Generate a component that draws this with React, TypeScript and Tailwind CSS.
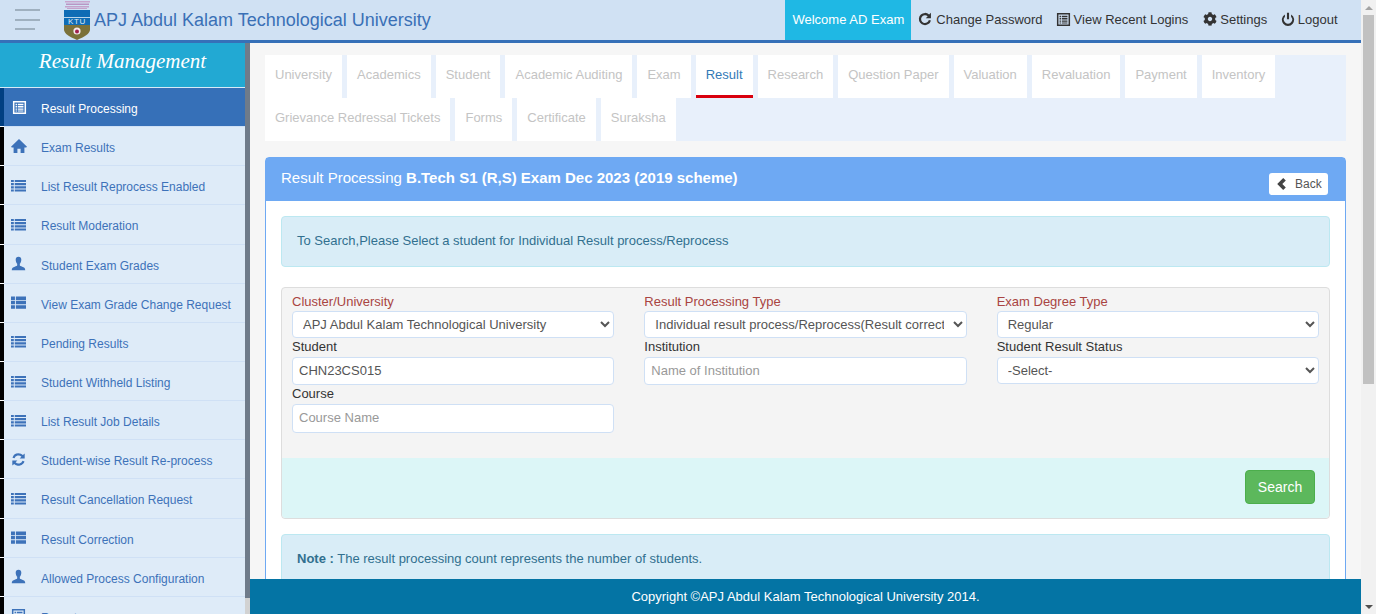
import React from "react";
import { FaCog } from "react-icons/fa";

const Ic = ({ children, size = 14 }: { children: React.ReactNode; size?: number }) => (
  <svg viewBox="0 0 16 16" width={size} height={size} fill="currentColor" className="block">{children}</svg>
);
const ListIcon = () => (
  <Ic size={15}>
    <path d="M0 2h3v2.3H0zM4 2h12v2.3H4zM0 5.4h3v2.3H0zM4 5.4h12v2.3H4zM0 8.8h3v2.3H0zM4 8.8h12v2.3H4zM0 12.2h3v2.3H0zM4 12.2h12v2.3H4z" />
  </Ic>
);
const ThList = () => (
  <Ic size={15}>
    <path d="M0 1.5h4.2v3.7H0zM5.2 1.5H16v3.7H5.2zM0 6.2h4.2v3.7H0zM5.2 6.2H16v3.7H5.2zM0 10.9h4.2v3.7H0zM5.2 10.9H16v3.7H5.2z" />
  </Ic>
);
const Book = () => (
  <Ic size={15}>
    <path fillRule="evenodd" d="M1 1h14v14H1zM2.600 2.600v10.800h10.800V2.600zM3.800 4h1.500v1.500H3.800zM6.200 4h6v1.500h-6zM3.800 6.500h1.500V8H3.800zM6.200 6.500h6V8h-6zM3.800 9h1.500v1.500H3.800zM6.200 9h6v1.500h-6zM3.800 11.300h1.500v1H3.800zM6.200 11.300h6v1h-6z" />
  </Ic>
);
const Home = () => (
  <Ic size={16}>
    <path d="M8 1 16 8.700l-.8.900H13.400V15H9.600v-4.300H6.400V15H2.600V9.600H.8L0 8.700z" />
  </Ic>
);
const User = () => (
  <Ic size={15}>
    <path d="M8 .8c2 0 3 1.400 3 3.200 0 1.900-.9 3.600-1.600 4.300v1.600c0 .6 1.100 1 2.600 1.600 1.800.7 3.200 1.200 3.200 3.700H.8c0-2.500 1.400-3 3.200-3.700 1.500-.6 2.600-1 2.600-1.600V8.300C5.900 7.600 5 5.900 5 4c0-1.800 1-3.200 3-3.200z" />
  </Ic>
);
const Refresh = () => (
  <Ic size={15}>
    <path d="M8 1.300a6.600 6.600 0 0 1 4.700 2L14.600 1.500V7H9.200l1.900-1.900A4.400 4.400 0 0 0 3.700 6.700L1.600 6A6.600 6.600 0 0 1 8 1.300zM1.400 9h5.400l-1.900 1.900a4.400 4.400 0 0 0 7.400-1.600l2.100.7a6.600 6.600 0 0 1-11 2.700L1.400 14.500z" />
  </Ic>
);
const Redo = () => (
  <Ic>
    <path d="M8 1a7 7 0 0 1 4.700 1.800L14.800 .8V7H8.900l2.200-2.200a4.500 4.500 0 1 0 1.300 4.400l2.400.5A7 7 0 1 1 8 1z" />
  </Ic>
);
const Power = () => (
  <Ic>
    <path d="M6.800 .8h2.400v7.400H6.800zM4.500 2.800v2.600a4.700 4.700 0 1 0 7 0V2.800a7 7 0 1 1-7 0z" />
  </Ic>
);
const Chevron = () => (
  <svg viewBox="0 0 10 12" width="10" height="12" fill="#444" className="block">
    <path d="M6.200 0 8.800 2.600 5.300 6l3.500 3.400L6.200 12 0.200 6z" />
  </svg>
);

const Logo = () => (
  <svg width="26" height="40" viewBox="0 0 26 40" className="shrink-0 mt-[1px]">
    <rect x="1" y="0" width="25" height="1.500" fill="#c9a6cf" />
    <rect x="2" y="2.500" width="23" height="1.500" fill="#b995c4" />
    <rect x="1" y="5" width="24" height="1.500" fill="#c4a2cb" />
    <rect x="3" y="7" width="20" height="1" fill="#c4a2cb" />
    <rect x="0" y="9" width="26" height="15" fill="#0f6cb5" />
    <rect x="0" y="16" width="26" height="1" fill="#bcd6ea" />
    <text x="13" y="23" textAnchor="middle" fontSize="8" letterSpacing="0.6" fill="#dfeaf4" fontFamily="'Liberation Sans', sans-serif">KTU</text>
    <path d="M0 24h26v4.500C26 33 20 36 13 39 6 36 0 33 0 28.500z" fill="#7b7139" />
    <circle cx="13" cy="30" r="3.600" fill="#f3e9ec" />
    <circle cx="13" cy="30.500" r="2" fill="#a0214e" />
  </svg>
);

const sideItems: [string, React.ReactNode][] = [
  ["Exam Results", <Home />],
  ["List Result Reprocess Enabled", <ListIcon />],
  ["Result Moderation", <ListIcon />],
  ["Student Exam Grades", <User />],
  ["View Exam Grade Change Request", <ThList />],
  ["Pending Results", <ListIcon />],
  ["Student Withheld Listing", <ListIcon />],
  ["List Result Job Details", <ListIcon />],
  ["Student-wise Result Re-process", <Refresh />],
  ["Result Cancellation Request", <ListIcon />],
  ["Result Correction", <ThList />],
  ["Allowed Process Configuration", <User />],
  ["Reports", <Book />],
];

const row1 = ["University", "Academics", "Student", "Academic Auditing", "Exam", "Result", "Research", "Question Paper", "Valuation", "Revaluation", "Payment", "Inventory"];
const row2 = ["Grievance Redressal Tickets", "Forms", "Certificate", "Suraksha"];

const Tab = ({ t }: { t: string }) => (
  <div
    className={
      "h-[43px] px-[10px] pt-[12px] mr-[5px] bg-white text-[13px] leading-[15px] " +
      (t === "Result" ? "text-[#337ab7] border-b-[3px] border-[#d9000d]" : "text-[#c4c4c4]")
    }
  >
    {t}
  </div>
);

const NavLink = ({ icon, label, cls }: { icon: React.ReactNode; label: string; cls: string }) => (
  <div className={"flex items-center text-[13px] text-[#333] " + cls}>
    <span className="-mt-[2px]">{icon}</span>
    <span>{label}</span>
  </div>
);

const labelRed = "block text-[13px] leading-[15px] text-[#a94442] h-[16px]";
const labelDark = "block text-[13px] leading-[15px] text-[#333] h-[16px] mt-[1px]";
const selectCls = "block w-full h-[27px] mt-[1px] pl-[6px] pr-[6px] text-[13px] text-[#555] bg-white border border-[#cfe0f5] rounded-[4px]";
const inputCls = "block w-full h-[28px] mt-[2px] px-[6px] pb-[2px] text-[13px] text-[#555] placeholder:text-[#999] bg-white border border-[#cfe0f5] rounded-[4px] outline-none";

export default function App() {
  return (
    <div className="h-[614px] w-[1376px] flex overflow-hidden bg-[#f6f6f6] font-['Liberation_Sans',Arial,sans-serif]">
      <div className="w-[1361px] flex flex-col h-full">
        <header className="h-[43px] shrink-0 flex items-stretch bg-[#d0e1f3] border-b-[3px] border-[#3670b8]">
          <div className="w-[64px] shrink-0 pl-[15px] pt-[9px] flex flex-col gap-[7.5px]">
            <div className="w-[25px] h-[2px] bg-[#9fb0bf]" />
            <div className="w-[25px] h-[2px] bg-[#9fb0bf]" />
            <div className="w-[20px] h-[2px] bg-[#9fb0bf]" />
          </div>
          <Logo />
          <div className="ml-[4px] text-[18px] leading-[40px] text-[#3a70b6]">APJ Abdul Kalam Technological University</div>
          <div className="ml-auto flex items-stretch pr-[16px]">
            <div className="w-[126px] flex items-center justify-center bg-[#1fb8e4] text-white text-[13px]">Welcome AD Exam</div>
            <NavLink icon={<Redo />} label="Change Password" cls="gap-[4.5px] pl-[6.5px] pr-[5.5px]" />
            <NavLink icon={<Book />} label="View Recent Logins" cls="gap-[3px] px-[7.5px]" />
            <NavLink icon={<FaCog size={14} className="block" />} label="Settings" cls="gap-[3px] pl-[7.5px] pr-[6px]" />
            <NavLink icon={<Power />} label="Logout" cls="gap-[3px] px-[7.5px]" />
          </div>
        </header>
        <div className="flex flex-1 min-h-0">
          <aside className="w-[250px] shrink-0 flex overflow-hidden">
            <div className="w-[245px] shrink-0 bg-white">
              <div className="h-[45px] bg-[#22a9d3] border-b border-[#d8ebf7] text-center text-white italic text-[21px] leading-[36px] font-['Liberation_Serif',serif]">
                Result Management
              </div>
              <div className="h-[39.1px] flex">
                <div className="w-[4px] shrink-0 mb-[1px] bg-[#003f82]" />
                <div className="flex-1 flex items-center pt-[4px] bg-[#3670b8] border-b border-[#cfe0f5] text-white text-[12px]">
                  <span className="w-[37px] pl-[8px] -mt-[4px]"><Book /></span>
                  <span>Result Processing</span>
                </div>
              </div>
              {sideItems.map(([label, icon]) => (
                <div key={label} className="h-[39.15px] flex">
                  <div className="w-[4px] shrink-0 mb-[1px] bg-black" />
                  <div className="flex-1 flex items-center pt-[4px] bg-[#deebf8] border-b border-[#cfe0f5] text-[#3d72b9] text-[12px]">
                    <span className="w-[37px] pl-[7px] -mt-[4px]">{icon}</span>
                    <span>{label}</span>
                  </div>
                </div>
              ))}
            </div>
            <div className="w-[5px] shrink-0 h-full bg-[#d2d2d2]">
              <div className="h-[555px] bg-[#6f7b8a]" />
            </div>
          </aside>
          <div className="flex-1 min-w-0 flex flex-col">
            <main className="flex-1 min-h-0 overflow-hidden pl-[15px] pr-[15px] pt-[12px]">
              <div className="h-[86px] bg-[#e8f0fb] flex flex-wrap content-start">
                <div className="flex w-full">{row1.map((t) => <Tab key={t} t={t} />)}</div>
                <div className="flex w-full">{row2.map((t) => <Tab key={t} t={t} />)}</div>
              </div>
              <section className="mt-[16px] border border-[#6ea9f3] rounded-t-[4px] bg-white">
                <div className="h-[43px] bg-[#6ea9f3] flex items-start justify-between pl-[15px] pr-[17px] text-white">
                  <div className="text-[15px] leading-[39px]">Result Processing <b>B.Tech S1 (R,S) Exam Dec 2023 (2019 scheme)</b></div>
                  <div className="mt-[15px] h-[22px] w-[59px] bg-white rounded-[3px] flex items-center pl-[8px] gap-[8px] text-[12px] text-[#555]">
                    <Chevron />
                    <span>Back</span>
                  </div>
                </div>
                <div className="px-[15px] pt-[15px] pb-[40px]">
                  <div className="h-[51px] bg-[#d9edf7] border border-[#bce8f1] rounded-[4px] flex items-center pl-[15px] pb-[2px] text-[13px] text-[#31708f]">
                    To Search,Please Select a student for Individual Result process/Reprocess
                  </div>
                  <div className="mt-[20px] h-[232px] bg-[#f4f4f4] border border-[#ddd] rounded-[4px] flex flex-col">
                    <div className="h-[170px] shrink-0 px-[10px] pt-[6px] grid grid-cols-3 gap-x-[30px] content-start">
                      <div>
                        <label className={labelRed}>Cluster/University</label>
                        <select className={selectCls} defaultValue="a">
                          <option value="a">APJ Abdul Kalam Technological University</option>
                        </select>
                        <label className={labelDark}>Student</label>
                        <input className={inputCls} defaultValue="CHN23CS015" />
                        <label className={labelDark}>Course</label>
                        <input className={inputCls + " h-[29px]"} placeholder="Course Name" />
                      </div>
                      <div>
                        <label className={labelRed}>Result Processing Type</label>
                        <select className={selectCls} defaultValue="a">
                          <option value="a">Individual result process/Reprocess(Result correction)</option>
                        </select>
                        <label className={labelDark}>Institution</label>
                        <input className={inputCls} placeholder="Name of Institution" />
                      </div>
                      <div>
                        <label className={labelRed}>Exam Degree Type</label>
                        <select className={selectCls} defaultValue="a">
                          <option value="a">Regular</option>
                        </select>
                        <label className={labelDark}>Student Result Status</label>
                        <select className={selectCls + " mt-[2px]"} defaultValue="a">
                          <option value="a">-Select-</option>
                        </select>
                      </div>
                    </div>
                    <div className="flex-1 bg-[#dcf6f7] flex justify-end items-start pt-[12px] pr-[14px] rounded-b-[4px]">
                      <div className="w-[70px] h-[34px] bg-[#5cb85c] border border-[#4cae4c] rounded-[4px] text-white text-[14px] flex items-center justify-center">Search</div>
                    </div>
                  </div>
                  <div className="mt-[15px] h-[80px] bg-[#d9edf7] border border-[#bce8f1] rounded-[4px] pl-[15px] pt-[16px] text-[13px] leading-[15px] text-[#31708f]">
                    <b>Note :</b> The result processing count represents the number of students.
                  </div>
                </div>
              </section>
            </main>
            <footer className="h-[35px] shrink-0 bg-[#0474a4] text-white text-[13px] flex items-center justify-center">
              Copyright ©APJ Abdul Kalam Technological University 2014.
            </footer>
          </div>
        </div>
      </div>
      <div className="w-[15px] shrink-0 h-full bg-[#f1f1f1] flex flex-col items-center">
        <div className="h-[15px] flex items-center justify-center">
          <div className="w-0 h-0 border-x-[4px] border-x-transparent border-b-[4px] border-b-[#a3a3a3]" />
        </div>
        <div className="w-[11px] h-[369px] bg-[#c1c1c1]" />
        <div className="mt-auto h-[15px] flex items-center justify-center">
          <div className="w-0 h-0 border-x-[4px] border-x-transparent border-t-[4px] border-t-[#505050]" />
        </div>
      </div>
    </div>
  );
}
